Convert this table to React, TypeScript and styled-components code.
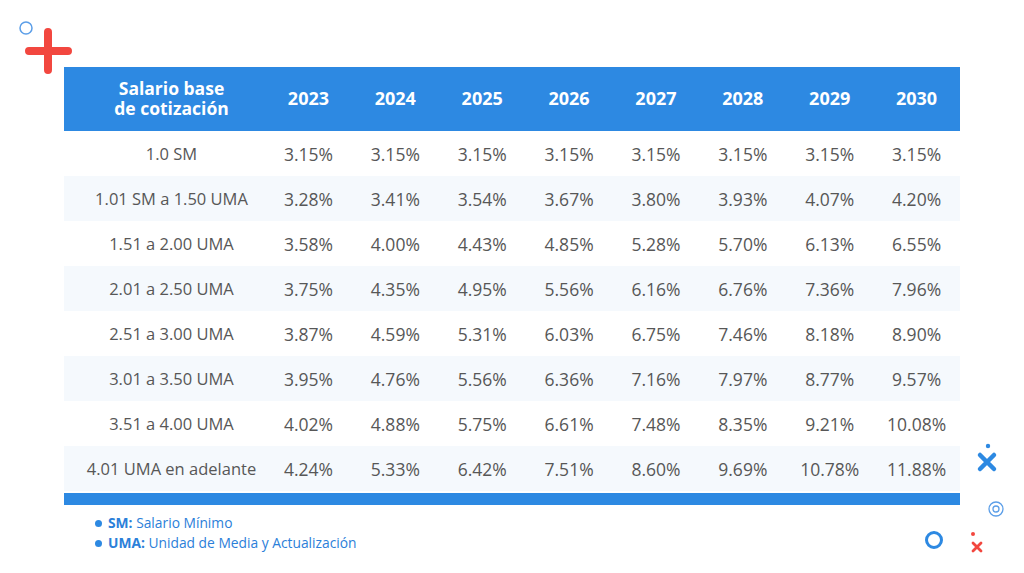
import styled, { createGlobalStyle } from "styled-components";

const GlobalStyle = createGlobalStyle`
  html, body {
    margin: 0;
    padding: 0;
    background: #ffffff;
  }
  body {
    font-family: "Open Sans", "Noto Sans", sans-serif;
  }
`;

const years = ["2023", "2024", "2025", "2026", "2027", "2028", "2029", "2030"];

const rows: { label: string; values: string[] }[] = [
  { label: "1.0 SM", values: ["3.15%", "3.15%", "3.15%", "3.15%", "3.15%", "3.15%", "3.15%", "3.15%"] },
  { label: "1.01 SM a 1.50 UMA", values: ["3.28%", "3.41%", "3.54%", "3.67%", "3.80%", "3.93%", "4.07%", "4.20%"] },
  { label: "1.51 a 2.00 UMA", values: ["3.58%", "4.00%", "4.43%", "4.85%", "5.28%", "5.70%", "6.13%", "6.55%"] },
  { label: "2.01 a 2.50 UMA", values: ["3.75%", "4.35%", "4.95%", "5.56%", "6.16%", "6.76%", "7.36%", "7.96%"] },
  { label: "2.51 a 3.00 UMA", values: ["3.87%", "4.59%", "5.31%", "6.03%", "6.75%", "7.46%", "8.18%", "8.90%"] },
  { label: "3.01 a 3.50 UMA", values: ["3.95%", "4.76%", "5.56%", "6.36%", "7.16%", "7.97%", "8.77%", "9.57%"] },
  { label: "3.51 a 4.00 UMA", values: ["4.02%", "4.88%", "5.75%", "6.61%", "7.48%", "8.35%", "9.21%", "10.08%"] },
  { label: "4.01 UMA en adelante", values: ["4.24%", "5.33%", "6.42%", "7.51%", "8.60%", "9.69%", "10.78%", "11.88%"] },
];

const Page = styled.div`
  position: relative;
  width: 1024px;
  height: 573px;
  overflow: hidden;
  background: #ffffff;
  padding: 67px 64px 0 64px;
  box-sizing: border-box;
`;

const Table = styled.div`
  width: 896px;
  display: flex;
  flex-direction: column;
`;

const Grid = styled.div`
  display: grid;
  grid-template-columns: 201px repeat(8, 1fr);
  align-items: center;
`;

const HeaderRow = styled(Grid)`
  height: 64px;
  background: #2d89e2;
  color: #ffffff;
  font-weight: 700;
  font-size: 18px;
`;

const HeaderCell = styled.div<{ $first?: boolean }>`
  text-align: center;
  line-height: 20px;
  white-space: nowrap;
  padding-bottom: 2px;
  padding-left: ${(p) => (p.$first ? "14px" : "0")};
  font-size: ${(p) => (p.$first ? "17.5px" : "18px")};
`;

const BodyRow = styled(Grid)<{ $striped: boolean }>`
  height: 45px;
  background: ${(p) => (p.$striped ? "#f5f9fd" : "#ffffff")};
  color: #575757;
`;

const Cell = styled.div<{ $first?: boolean }>`
  text-align: center;
  white-space: nowrap;
  padding-left: ${(p) => (p.$first ? "14px" : "0")};
  font-size: ${(p) => (p.$first ? "16.5px" : "17.5px")};
`;

const BottomBar = styled.div`
  margin-top: 2px;
  height: 12px;
  background: #2d89e2;
`;

const Legend = styled.ul`
  list-style: none;
  margin: 9px 0 0 31px;
  padding: 0;
  display: flex;
  flex-direction: column;
  gap: 2px;
`;

const LegendItem = styled.li`
  display: flex;
  align-items: center;
  gap: 6px;
  font-size: 13.8px;
  line-height: 18px;
  color: #2b80d9;

  &::before {
    content: "";
    width: 7px;
    height: 7px;
    border-radius: 50%;
    background: #2d89e2;
  }

  b {
    font-weight: 700;
  }
`;

const Deco = styled.svg<{ $x: number; $y: number }>`
  position: absolute;
  left: ${(p) => p.$x}px;
  top: ${(p) => p.$y}px;
  overflow: visible;
`;

export default function App() {
  return (
    <>
      <GlobalStyle />
      <Page>
        <Deco $x={18} $y={20} width="60" height="60" viewBox="0 0 60 60">
          <circle cx="8" cy="8" r="6" fill="none" stroke="#5b9ee8" strokeWidth="1.5" />
          <path d="M30 12 V50 M11 31 H50" stroke="#f2473f" strokeWidth="8" strokeLinecap="round" />
        </Deco>
        <Table>
          <HeaderRow>
            <HeaderCell $first>
              Salario base
              <br />
              de cotización
            </HeaderCell>
            {years.map((y) => (
              <HeaderCell key={y}>{y}</HeaderCell>
            ))}
          </HeaderRow>
          {rows.map((r, i) => (
            <BodyRow key={r.label} $striped={i % 2 === 1}>
              <Cell $first>{r.label}</Cell>
              {r.values.map((v, j) => (
                <Cell key={j}>{v}</Cell>
              ))}
            </BodyRow>
          ))}
          <BottomBar />
          <Legend>
            <LegendItem>
              <span>
                <b>SM:</b> Salario Mínimo
              </span>
            </LegendItem>
            <LegendItem>
              <span>
                <b>UMA:</b> Unidad de Media y Actualización
              </span>
            </LegendItem>
          </Legend>
        </Table>
        <Deco $x={970} $y={438} width="40" height="40" viewBox="0 0 40 40">
          <circle cx="18" cy="8" r="2.2" fill="#2d89e2" />
          <path d="M10 17 L24 31 M24 17 L10 31" stroke="#2d89e2" strokeWidth="4.5" strokeLinecap="round" />
        </Deco>
        <Deco $x={986} $y={499} width="20" height="20" viewBox="0 0 20 20">
          <circle cx="10" cy="10" r="7" fill="none" stroke="#5b9ee8" strokeWidth="1.3" />
          <circle cx="10" cy="10" r="3" fill="none" stroke="#5b9ee8" strokeWidth="1.3" />
        </Deco>
        <Deco $x={922} $y={528} width="24" height="24" viewBox="0 0 24 24">
          <circle cx="12" cy="12" r="7.5" fill="none" stroke="#2d89e2" strokeWidth="3" />
        </Deco>
        <Deco $x={965} $y={528} width="24" height="30" viewBox="0 0 24 30">
          <circle cx="8" cy="6" r="2" fill="#f2473f" />
          <path d="M8 15 L16 23 M16 15 L8 23" stroke="#f2473f" strokeWidth="2.8" strokeLinecap="round" />
        </Deco>
      </Page>
    </>
  );
}
